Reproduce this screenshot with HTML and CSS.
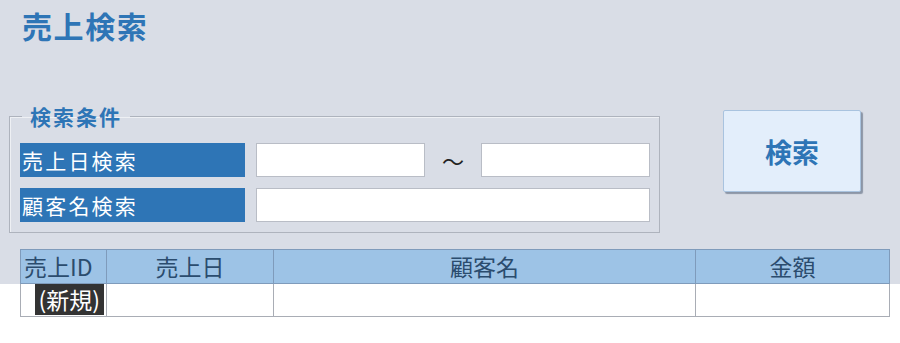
FILE: index.html
```html
<!DOCTYPE html>
<html lang="ja">
<head>
<meta charset="utf-8">
<title>売上検索</title>
<link rel="stylesheet" href="styles.css">
</head>
<body>
<div class="form-header">
  <h1 class="title">売上検索</h1>
  <div class="search-area">
    <fieldset class="criteria">
      <legend class="criteria-legend">検索条件</legend>
      <div class="criteria-grid">
        <div class="label">売上日検索</div>
        <div class="range">
          <div class="textbox"></div>
          <span class="tilde">～</span>
          <div class="textbox"></div>
        </div>
        <div class="label">顧客名検索</div>
        <div class="textbox"></div>
      </div>
    </fieldset>
    <button class="search-btn" type="button">検索</button>
  </div>
  <div class="grid-head">
    <div class="hcell">売上ID</div>
    <div class="hcell center">売上日</div>
    <div class="hcell center">顧客名</div>
    <div class="hcell center">金額</div>
  </div>
</div>
<div class="detail">
  <div class="grid-row">
    <div class="cell right"><span class="new-mark">(新規)</span></div>
    <div class="cell"></div>
    <div class="cell"></div>
    <div class="cell"></div>
  </div>
</div>
</body>
</html>
```
FILE: styles.css
```css
html, body {
  margin: 0;
  padding: 0;
  background: #ffffff;
  font-family: "Noto Sans CJK JP", "Noto Sans", sans-serif;
}

.form-header {
  background: #d9dde6;
  padding: 6px 0 0 0;
}

.title {
  margin: 0 0 0 22px;
  font-size: 30px;
  line-height: 38px;
  font-weight: bold;
  letter-spacing: 1.6px;
  color: #2e75b6;
}

.search-area {
  display: flex;
  align-items: flex-start;
  margin-top: 60px;
  padding-left: 9px;
}

.criteria {
  margin: 0;
  width: 651px;
  box-sizing: border-box;
  border: 1px solid #aeb3bd;
  box-shadow: inset 1px 1px 0 #eef0f4;
  padding: 15px 9px 10px 10px;
}

.criteria-legend {
  margin-left: 2px;
  padding: 0 8px 0 8px;
  font-size: 21px;
  line-height: 24px;
  font-weight: bold;
  letter-spacing: 2px;
  color: #2e75b6;
}

.criteria-grid {
  display: grid;
  grid-template-columns: 225px 1fr;
  column-gap: 11px;
  row-gap: 11px;
}

.label {
  height: 34px;
  background: #2e75b6;
  color: #ffffff;
  font-size: 21px;
  line-height: 34px;
  letter-spacing: 2.2px;
  padding-left: 2px;
  box-sizing: border-box;
  white-space: nowrap;
}

.range {
  display: flex;
  align-items: center;
}

.range .textbox {
  width: 169px;
}

.textbox {
  height: 34px;
  box-sizing: border-box;
  background: #ffffff;
  border: 1px solid #b9bdc6;
}

.tilde {
  flex: 1;
  text-align: center;
  font-size: 22px;
  color: #222222;
  line-height: 34px;
}

.search-btn {
  margin: 6px 0 0 63px;
  width: 138px;
  height: 82px;
  background: #e3eefb;
  border: 1px solid #a9c3df;
  border-radius: 2px;
  box-shadow: 2px 2px 1px #8b95a6;
  font-family: "Noto Sans CJK JP", "Noto Sans", sans-serif;
  font-size: 27px;
  font-weight: bold;
  color: #2e75b6;
  padding: 0;
}

.grid-head {
  display: grid;
  grid-template-columns: 86px 167px 422px 195px;
  margin: 16px 0 0 20px;
  width: 870px;
}

.hcell {
  height: 35px;
  box-sizing: border-box;
  background: #9dc3e6;
  border-top: 1px solid #7f9bbb;
  border-left: 1px solid #7f9bbb;
  border-bottom: 1px solid #7f9bbb;
  color: #2b4c6e;
  font-size: 23px;
  line-height: 33px;
  padding-left: 3px;
  white-space: nowrap;
}

.hcell:last-child {
  border-right: 1px solid #7f9bbb;
}

.center {
  text-align: center;
  padding-left: 0;
}

.detail {
  padding: 0 0 0 20px;
}

.grid-row {
  display: grid;
  grid-template-columns: 86px 167px 422px 195px;
  width: 870px;
}

.cell {
  height: 33px;
  box-sizing: border-box;
  border-left: 1px solid #a9adb5;
  border-bottom: 1px solid #a9adb5;
  background: #ffffff;
}

.cell:last-child {
  border-right: 1px solid #a9adb5;
}

.right {
  text-align: right;
  padding-right: 2px;
}

.new-mark {
  display: inline-block;
  background: #333333;
  color: #ffffff;
  font-size: 23px;
  line-height: 31px;
  padding: 0 4px 0 3px;
}
```
